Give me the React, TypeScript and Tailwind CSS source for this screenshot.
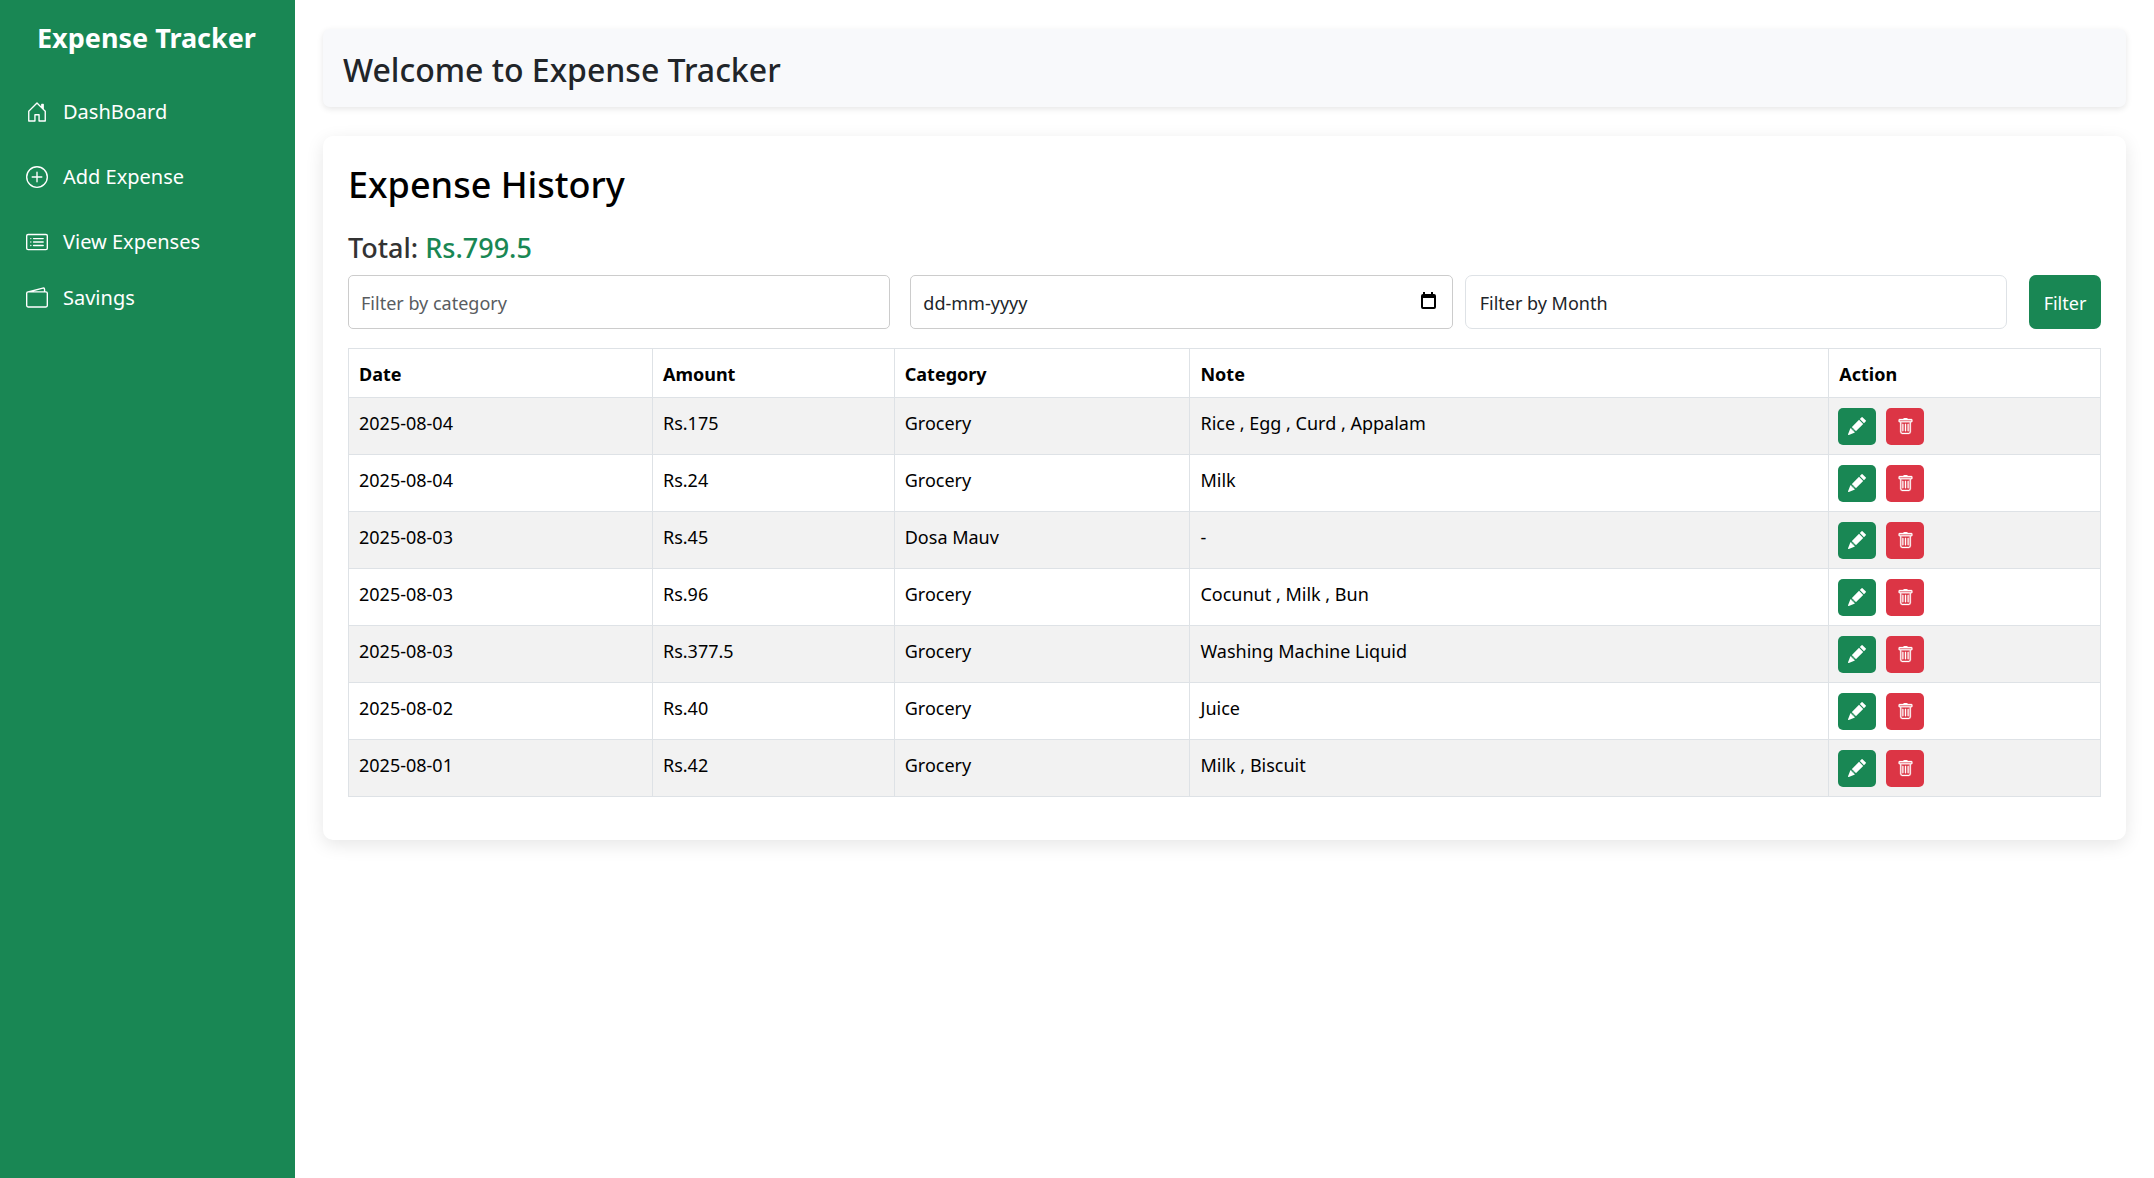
import { BsHouseDoor, BsPlusCircle, BsCardList, BsWallet2, BsPencilFill, BsTrash } from "react-icons/bs";

const nav = [
  { label: "DashBoard", Icon: BsHouseDoor, row: "h-[65px]" },
  { label: "Add Expense", Icon: BsPlusCircle, row: "h-[65px]" },
  { label: "View Expenses", Icon: BsCardList, row: "h-[65px]" },
  { label: "Savings", Icon: BsWallet2, row: "h-12" },
];

const expenses = [
  ["2025-08-04", "Rs.175", "Grocery", "Rice , Egg , Curd , Appalam"],
  ["2025-08-04", "Rs.24", "Grocery", "Milk"],
  ["2025-08-03", "Rs.45", "Dosa Mauv", "-"],
  ["2025-08-03", "Rs.96", "Grocery", "Cocunut , Milk , Bun"],
  ["2025-08-03", "Rs.377.5", "Grocery", "Washing Machine Liquid"],
  ["2025-08-02", "Rs.40", "Grocery", "Juice"],
  ["2025-08-01", "Rs.42", "Grocery", "Milk , Biscuit"],
];

const columns = [
  { name: "Date", width: "w-[17.35%]" },
  { name: "Amount", width: "w-[13.8%]" },
  { name: "Category", width: "w-[16.88%]" },
  { name: "Note", width: "w-[36.46%]" },
  { name: "Action", width: "" },
];

function Sidebar() {
  return (
    <aside className="w-[295px] shrink-0 bg-[#198754] text-white">
      <div className="px-[37px] pt-4 text-[27px] leading-11 font-bold whitespace-nowrap">Expense Tracker</div>
      <nav className="mt-[19px] flex flex-col pl-[26px]">
        {nav.map(({ label, Icon, row }) => (
          <a key={label} href="#" className={`flex ${row} items-center gap-[15px] text-[20px]`}>
            <Icon size={22} />
            {label}
          </a>
        ))}
      </nav>
    </aside>
  );
}

function Filters() {
  return (
    <form className="mt-[9px] flex h-[54px] text-[18px] text-[#212529]" onSubmit={(e) => e.preventDefault()}>
      <div className="mr-5 min-w-0 flex-1">
        <input
          type="text"
          aria-label="Filter by category"
          placeholder="Filter by category"
          className="h-full w-full rounded-[5px] border border-[#cccccc] px-3 pt-0.5 placeholder:text-[#595c5f]"
        />
      </div>
      <div className="relative mr-3 min-w-0 flex-1">
        <input
          type="text"
          aria-label="Filter by date"
          placeholder="dd-mm-yyyy"
          className="h-full w-full rounded-[5px] border border-[#cccccc] px-3 pt-0.5 placeholder:text-[#212529]"
        />
        <button type="button" aria-label="Open calendar" className="absolute top-4 right-4">
          <svg width="19" height="20" viewBox="0 0 19 20">
            <path
              d="M5 1h2v2h6V1h2v2h1a2 2 0 0 1 2 2v11a2 2 0 0 1-2 2H5a2 2 0 0 1-2-2V5a2 2 0 0 1 2-2zM5 7v9h11V7z"
              fill="#000"
              fillRule="evenodd"
            />
          </svg>
        </button>
      </div>
      <div className="mr-[22px] min-w-0 flex-1">
        <select
          aria-label="Filter by Month"
          className="h-full w-full appearance-none rounded-[7px] border border-[#dee2e6] bg-white px-[14px] pt-0.5"
        >
          <option>Filter by Month</option>
        </select>
      </div>
      <button type="submit" className="w-[72px] rounded-[7px] bg-[#198754] pt-0.5 text-white">
        Filter
      </button>
    </form>
  );
}

function ExpenseTable() {
  return (
    <table className="mt-[19px] w-full table-fixed border-collapse text-[18px] leading-7 text-black">
      <thead>
        <tr className="h-[49px]">
          {columns.map((c) => (
            <th key={c.name} className={`${c.width} border border-[#dee2e6] px-[10px] pt-0.5 text-left font-bold`}>
              {c.name}
            </th>
          ))}
        </tr>
      </thead>
      <tbody>
        {expenses.map((row, i) => (
          <tr key={i} className="h-[57px] odd:bg-[#f2f2f2]">
            {row.map((cell, j) => (
              <td key={j} className="border border-[#dee2e6] px-[10px] pt-[11px] align-top">
                {cell}
              </td>
            ))}
            <td className="border border-[#dee2e6] px-[9px] align-middle">
              <div className="flex gap-[10px]">
                <button
                  aria-label="Edit"
                  className="flex h-[37px] w-[38px] items-center justify-center rounded-[5px] bg-[#198754] text-white"
                >
                  <BsPencilFill size={18} />
                </button>
                <button
                  aria-label="Delete"
                  className="flex h-[37px] w-[38px] items-center justify-center rounded-[5px] bg-[#dc3545] text-white"
                >
                  <BsTrash size={17} strokeWidth={0.3} />
                </button>
              </div>
            </td>
          </tr>
        ))}
      </tbody>
    </table>
  );
}

export default function App() {
  return (
    <div className="flex min-h-screen bg-white font-['Noto_Sans',sans-serif]">
      <Sidebar />
      <main className="min-w-0 flex-1 px-7 pt-[29px]">
        <header className="rounded-[7px] bg-[#f8f9fb] px-5 pt-5 pb-4 shadow-[0_2px_6px_rgba(0,0,0,0.1)]">
          <h1 className="text-[32px] leading-[42px] font-medium text-[#212529]">Welcome to Expense Tracker</h1>
        </header>
        <section className="mt-[29px] rounded-[10px] bg-white px-[25px] pt-6 pb-[43px] shadow-[0_5px_18px_rgba(0,0,0,0.1)]">
          <h2 className="text-[36px] leading-[50px] font-medium text-black">Expense History</h2>
          <p className="mt-5 text-[27px] leading-9 font-medium text-[#333333]">
            Total: <span className="text-[#198754]">Rs.799.5</span>
          </p>
          <Filters />
          <ExpenseTable />
        </section>
      </main>
    </div>
  );
}
